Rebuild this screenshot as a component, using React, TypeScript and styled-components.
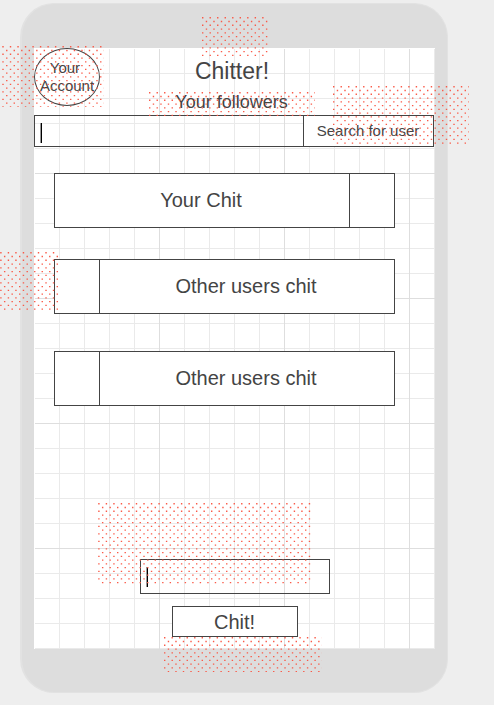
import React from "react";
import styled, { createGlobalStyle } from "styled-components";

const GlobalStyle = createGlobalStyle`
  * { box-sizing: border-box; }
  body {
    margin: 0;
    background: #eeeeee;
    color: #444444;
    font-family: "Liberation Sans", Arial, sans-serif;
    overflow: hidden;
  }
`;

const Page = styled.main`
  position: relative;
  width: 494px;
  height: 705px;
  padding: 3px 0 0 20px;
  overflow: hidden;
`;

const Phone = styled.div`
  width: 428px;
  height: 690px;
  padding: 44px 12px 0;
  border: 1px solid #e2e2e2;
  border-width: 1px 1px 1px 2px;
  border-radius: 34px;
  background: #dddddd;
`;

const Screen = styled.div`
  width: 401px;
  height: 601px;
  display: flex;
  flex-direction: column;
  background-color: #ffffff;
  background-image:
    linear-gradient(90deg, #dedede 1px, transparent 1px),
    linear-gradient(#dedede 1px, transparent 1px),
    linear-gradient(90deg, #eaeaea 1px, transparent 1px),
    linear-gradient(#eaeaea 1px, transparent 1px);
  background-size: 125px 125px, 125px 125px, 25px 25px, 25px 25px;
  background-position: 0 0;
  box-shadow: inset 1px 1px 0 #ffffff;
`;

const Header = styled.header`
  display: grid;
  grid-template-columns: 66px 265px;
  height: 67px;
`;

const Account = styled.div`
  width: 66px;
  height: 58px;
  display: flex;
  align-items: center;
  justify-content: center;
  border: 1px solid #444444;
  border-radius: 50%;
  background: #ffffff;
  text-align: center;
  font-size: 15px;
  line-height: 18px;
  white-space: pre;
`;

const Titles = styled.div`
  display: flex;
  flex-direction: column;
  align-items: center;
  padding: 10px 1px 0 0;
`;

const Title = styled.h1`
  margin: 0;
  font-size: 23px;
  font-weight: 400;
  line-height: 27px;
`;

const Subtitle = styled.h2`
  margin: 6px 0 0;
  padding-right: 1px;
  font-size: 18px;
  font-weight: 400;
  line-height: 22px;
`;

const SearchBar = styled.div`
  display: flex;
  width: 400px;
  height: 32px;
  border: 1px solid #444444;
`;

const SearchField = styled.div`
  flex: 1;
  padding: 7px 0 0 5px;
`;

const SearchButton = styled.div`
  width: 130px;
  padding-right: 1px;
  border-left: 1px solid #444444;
  background: #ffffff;
  text-align: center;
  font-size: 15px;
  line-height: 30px;
`;

const Caret = styled.div`
  width: 2px;
  height: 20px;
  background: linear-gradient(90deg, #999999 0 1px, #000000 1px 2px);
`;

const Feed = styled.section`
  display: flex;
  flex-direction: column;
  padding: 26px 0 0 20px;
`;

const Chit = styled.article<{ $own?: boolean; $gap?: number }>`
  display: flex;
  flex-direction: ${(p) => (p.$own ? "row-reverse" : "row")};
  width: 341px;
  height: 55px;
  margin-bottom: ${(p) => p.$gap ?? 0}px;
  border: 1px solid #444444;
  background: #ffffff;
`;

const Avatar = styled.div<{ $own?: boolean }>`
  width: 45px;
  border: 0 solid #444444;
  border-width: ${(p) => (p.$own ? "0 0 0 1px" : "0 1px 0 0")};
`;

const ChitTextBox = styled.div`
  flex: 1;
  padding-right: 2px;
  text-align: center;
  font-size: 20px;
  line-height: 53px;
`;

const Composer = styled.section`
  display: flex;
  flex-direction: column;
  margin: 153px 0 0 106px;
`;

const ComposeField = styled.div`
  width: 190px;
  height: 35px;
  padding: 7px 0 0 5px;
  border: 1px solid #444444;
`;

const ChitButton = styled.div`
  width: 126px;
  height: 31px;
  margin: 12px 0 0 32px;
  padding-right: 1px;
  border: 1px solid #444444;
  background: #ffffff;
  text-align: center;
  font-size: 20px;
  line-height: 30px;
`;

const Dots = styled.svg<{ $x: number; $y: number }>`
  position: absolute;
  left: ${(p) => p.$x}px;
  top: ${(p) => p.$y}px;
  pointer-events: none;
`;

type Patch = { x: number; y: number; w: number; h: number; shift?: number };

const patches: Patch[] = [
  { x: 202, y: 17, w: 66, h: 39 },
  { x: 0, y: 46, w: 104, h: 61, shift: 2.3 },
  { x: 149, y: 92, w: 166, h: 24 },
  { x: 333, y: 86, w: 136, h: 60 },
  { x: 0, y: 252, w: 59, h: 58, shift: 0.2 },
  { x: 98, y: 503, w: 214, h: 81, shift: 0.2 },
  { x: 164, y: 637, w: 158, h: 35 },
];

// Staggered rows of small squares, half a column apart.
const STEP = 3.76;
function dotPath({ w, h, shift = 0 }: Patch) {
  let d = "";
  for (let row = 0; row * STEP < h - 0.5; row++) {
    const start = shift + (row % 2 ? STEP : 0) - STEP * 2;
    for (let x = start; x < w; x += STEP * 2) {
      d += `M${x.toFixed(2)} ${(row * STEP + 0.1).toFixed(2)}h1.4v1.3h-1.4z`;
    }
  }
  return d;
}

export default function App() {
  return (
    <Page>
      <GlobalStyle />
      <Phone>
        <Screen>
          <Header>
            <Account>{"Your \nAccount"}</Account>
            <Titles>
              <Title>Chitter!</Title>
              <Subtitle>Your followers</Subtitle>
            </Titles>
          </Header>
          <SearchBar>
            <SearchField>
              <Caret />
            </SearchField>
            <SearchButton>Search for user</SearchButton>
          </SearchBar>
          <Feed>
            <Chit $own $gap={31}>
              <Avatar $own />
              <ChitTextBox>Your Chit</ChitTextBox>
            </Chit>
            <Chit $gap={37}>
              <Avatar />
              <ChitTextBox>Other users chit</ChitTextBox>
            </Chit>
            <Chit>
              <Avatar />
              <ChitTextBox>Other users chit</ChitTextBox>
            </Chit>
          </Feed>
          <Composer>
            <ComposeField>
              <Caret />
            </ComposeField>
            <ChitButton>Chit!</ChitButton>
          </Composer>
        </Screen>
      </Phone>
      {patches.map((p) => (
        <Dots key={`${p.x}-${p.y}`} $x={p.x} $y={p.y} width={p.w} height={p.h} aria-hidden>
          <path d={dotPath(p)} fill="#fa5a48" />
        </Dots>
      ))}
    </Page>
  );
}
